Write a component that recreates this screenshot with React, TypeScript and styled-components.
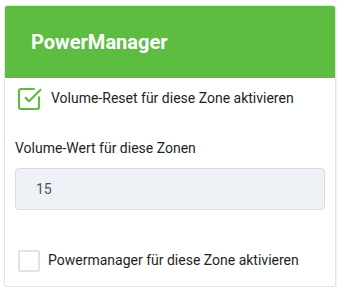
import React from "react";
import styled, { createGlobalStyle } from "styled-components";

const GlobalStyle = createGlobalStyle`
  html, body { margin: 0; padding: 0; background: #ffffff; }
  body { font-family: Roboto, "Liberation Sans", Arial, sans-serif; }
`;

const Page = styled.div`
  padding: 5px 3px 0 4px;
`;

const Card = styled.div`
  width: 332px;
  box-sizing: border-box;
  border: 1px solid #e2e2e2;
  border-radius: 3px;
  background: #fff;
  box-shadow: 1px 1px 2px rgba(0, 0, 0, 0.06);
  overflow: hidden;
`;

const Header = styled.div`
  height: 72px;
  background: #5cbd41;
  display: flex;
  align-items: center;
  padding: 0 26px;
`;

const Title = styled.h2`
  margin: 0;
  color: #ffffff;
  font-size: 20px;
  font-weight: 700;
  line-height: 24px;
`;

const Body = styled.div`
  display: flex;
  flex-direction: column;
  padding: 10px 10px 14px 10px;
`;

const CheckRow = styled.label<{ $top: number }>`
  display: flex;
  align-items: flex-start;
  margin-top: ${(p) => p.$top}px;
  padding-left: 3px;
  cursor: pointer;
`;

const CheckText = styled.span<{ $gap: number }>`
  margin-left: ${(p) => p.$gap}px;
  font-size: 14px;
  line-height: 17px;
  color: #1d1f22;
  padding-top: 2px;
`;

const EmptyBox = styled.span`
  width: 22px;
  height: 22px;
  box-sizing: border-box;
  border: 2px solid #e3e3e3;
  border-radius: 2px;
  flex-shrink: 0;
`;

const CheckIcon = styled.svg`
  flex-shrink: 0;
  overflow: visible;
`;

const FieldLabel = styled.div`
  margin-top: 30px;
  font-size: 14px;
  line-height: 17px;
  color: #1d1f22;
`;

const Input = styled.div`
  margin-top: 11px;
  height: 42px;
  box-sizing: border-box;
  background: #eef1f5;
  border: 1px solid #d7dbe0;
  border-radius: 4px;
  display: flex;
  align-items: center;
  padding-left: 20px;
  font-size: 14px;
  color: #4a5468;
`;

const CheckedBox = () => (
  <CheckIcon width="26" height="22" viewBox="0 0 26 22" fill="none">
    <path
      d="M21 9.3V19a2 2 0 0 1-2 2H3a2 2 0 0 1-2-2V3a2 2 0 0 1 2-2h13"
      stroke="#5cbd41"
      strokeWidth="2.2"
      strokeLinecap="round"
      strokeLinejoin="round"
    />
    <path
      d="M7.7 9.9L11 13.2L22.5 1.7"
      stroke="#5cbd41"
      strokeWidth="2.2"
      strokeLinecap="round"
      strokeLinejoin="round"
    />
  </CheckIcon>
);

export default function App() {
  return (
    <>
      <GlobalStyle />
      <Page>
        <Card>
          <Header>
            <Title>PowerManager</Title>
          </Header>
          <Body>
            <CheckRow $top={0}>
              <CheckedBox />
              <CheckText $gap={7}>Volume-Reset für diese Zone aktivieren</CheckText>
            </CheckRow>
            <FieldLabel>Volume-Wert für diese Zonen</FieldLabel>
            <Input>15</Input>
            <CheckRow $top={40}>
              <EmptyBox />
              <CheckText $gap={8}>Powermanager für diese Zone aktivieren</CheckText>
            </CheckRow>
          </Body>
        </Card>
      </Page>
    </>
  );
}
